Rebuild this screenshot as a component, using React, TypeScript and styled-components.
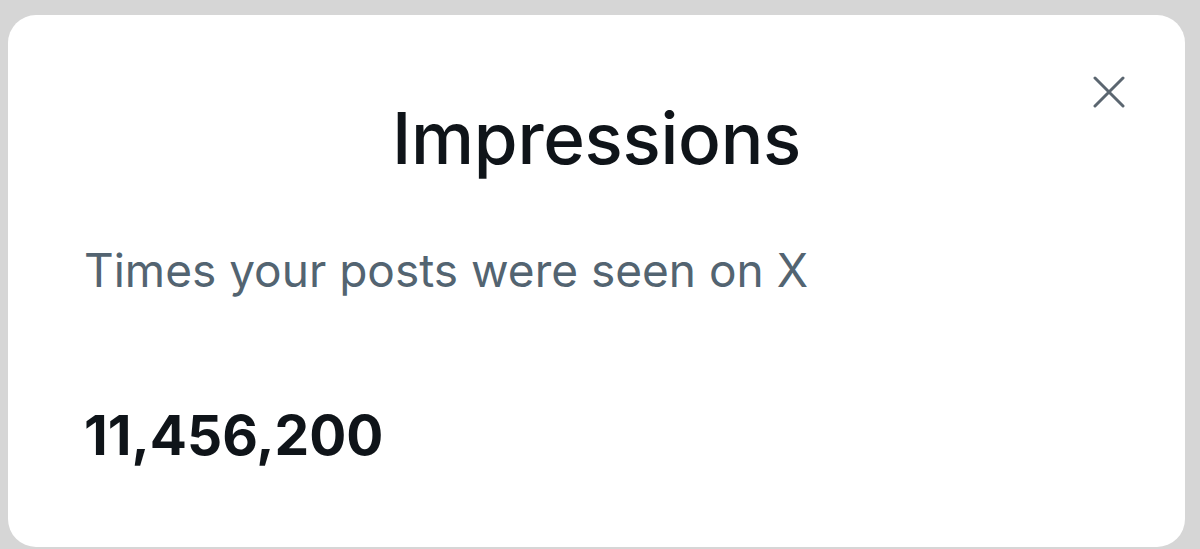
import React from "react";
import styled, { createGlobalStyle } from "styled-components";

const Global = createGlobalStyle`
  html, body {
    margin: 0;
    padding: 0;
    background: #d6d6d6;
    overflow: hidden;
    font-family: Inter, "Noto Sans", sans-serif;
  }
`;

const Page = styled.div`
  width: 1200px;
  height: 549px;
  padding: 15px 15px 0 8px;
  box-sizing: border-box;
  display: flex;
  flex-direction: column;
  overflow: hidden;
`;

const Card = styled.section`
  position: relative;
  flex: none;
  width: 1177px;
  height: 532px;
  background: #ffffff;
  border-radius: 28px;
  box-sizing: border-box;
  padding: 73px 76px 0 76px;
  display: flex;
  flex-direction: column;
`;

const Title = styled.h1`
  margin: 0;
  text-align: center;
  font-size: 71px;
  font-weight: 500;
  line-height: 100px;
  color: #0f1419;
  letter-spacing: -0.3px;
`;

const Subtitle = styled.p`
  margin: 0;
  margin-top: 52px;
  font-size: 46px;
  font-weight: 400;
  line-height: 60px;
  color: #536471;
`;

const Count = styled.div`
  margin-top: 103px;
  font-size: 55px;
  font-weight: 700;
  line-height: 64px;
  color: #0f1419;
`;

const Close = styled.button`
  position: absolute;
  top: 59px;
  right: 58px;
  width: 36px;
  height: 36px;
  padding: 0;
  border: none;
  background: transparent;
  display: flex;
  align-items: center;
  justify-content: center;
  cursor: pointer;
`;

const Behind = styled.div`
  margin-left: 66px;
  font-size: 40px;
  font-weight: 700;
  line-height: 40px;
  color: #1a1a1a;
  white-space: nowrap;
`;

export default function App() {
  return (
    <>
      <Global />
      <Page>
        <Card>
          <Close aria-label="Close">
            <svg width="32" height="32" viewBox="0 0 32 32">
              <path
                d="M2 2 L30 30 M30 2 L2 30"
                stroke="#5b6670"
                strokeWidth="3"
                strokeLinecap="round"
              />
            </svg>
          </Close>
          <Title>Impressions</Title>
          <Subtitle>Times your posts were seen on X</Subtitle>
          <Count>11,456,200</Count>
        </Card>
        <Behind>Profile visits 178</Behind>
      </Page>
    </>
  );
}
